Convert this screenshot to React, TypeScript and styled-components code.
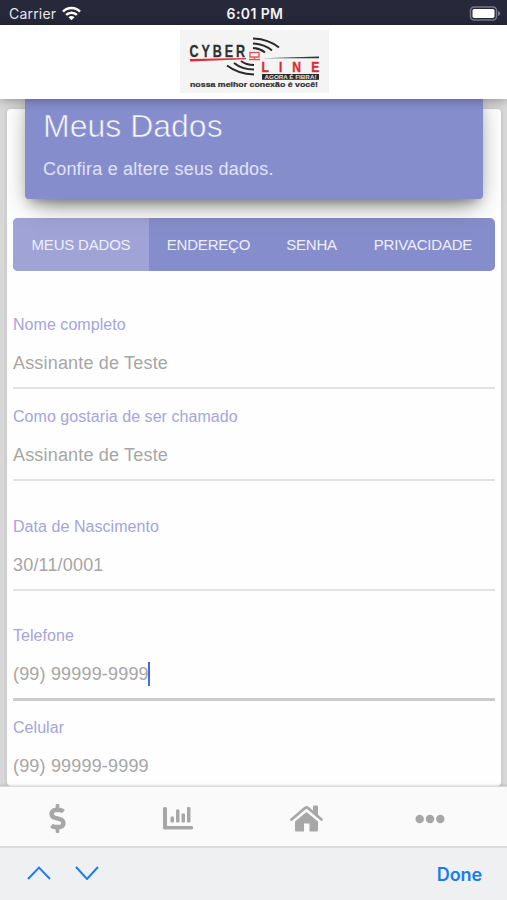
import React from "react";
import styled, { createGlobalStyle } from "styled-components";
import { FaDollarSign, FaEllipsisH } from "react-icons/fa";

const GlobalStyle = createGlobalStyle`
  * { box-sizing: border-box; }
  body { margin: 0; background: #d8d8d8; font-family: "Liberation Sans", Arial, sans-serif; }
`;

const Screen = styled.div`
  display: flex;
  flex-direction: column;
  width: 507px;
  height: 900px;
  overflow: hidden;
  background: #d8d8d8;
`;

const StatusBar = styled.header`
  display: grid;
  grid-template-columns: 1fr auto 1fr;
  align-items: center;
  flex: none;
  height: 25px;
  padding: 2px 6px 0 9px;
  background: #272839;
  color: #e6e6ee;
  font: 400 14px/20px Inter, sans-serif;
`;

const Carrier = styled.div`
  display: flex;
  align-items: center;
  gap: 6px;
  letter-spacing: 0.2px;
`;

const Clock = styled.div`
  color: #f4f4f8;
  font-weight: 600;
  font-size: 14px;
  letter-spacing: 0.4px;
`;

const BatteryIcon = styled.svg`
  justify-self: end;
  margin-top: -1px;
`;

const LogoBar = styled.div`
  position: relative;
  z-index: 2;
  display: flex;
  flex: none;
  justify-content: center;
  height: 74px;
  padding-top: 5px;
  padding-left: 1px;
  background: #fff;
  box-shadow: 0 1px 10px rgba(0, 0, 0, 0.32);
`;

const Content = styled.main`
  flex: 1;
  min-height: 0;
  padding: 10px 6px 0 7px;
  overflow: hidden;
`;

const Card = styled.section`
  height: 677px;
  padding: 0 6px;
  background: #fefefe;
  border-radius: 4px;
  box-shadow: 0 1px 4px rgba(0, 0, 0, 0.14);
`;

const Hero = styled.div`
  height: 110px;
  margin: 0 12px;
  padding: 19px 18px 0 18px;
  transform: translateY(-20px);
  border-radius: 4px;
  background: #868dcc;
  box-shadow: 0 13px 24px -10px rgba(50, 55, 50, 0.6), 0 4px 22px rgba(0, 0, 0, 0.13),
    0 7px 9px -5px rgba(50, 60, 50, 0.35);
`;

const Title = styled.h1`
  margin: 0;
  color: #f7f8ff;
  font-size: 32px;
  font-weight: 400;
  line-height: 36px;
  -webkit-text-stroke: 0.6px #868dcc;
`;

const Subtitle = styled.p`
  margin: 14px 0 0;
  color: #e0e3f8;
  font-size: 18px;
  line-height: 22px;
  letter-spacing: 0.2px;
`;

const Tabs = styled.nav`
  display: flex;
  height: 53px;
  overflow: hidden;
  margin-top: -1px;
  border-radius: 5px;
  background: #868dcc;
`;

const Tab = styled.button<{ $width: number; $active?: boolean }>`
  width: ${(p) => p.$width}px;
  height: 100%;
  padding: 0;
  border: 0;
  background: ${(p) => (p.$active ? "#9fa3d6" : "transparent")};
  color: #eef0ff;
  font: 400 15px/20px "Liberation Sans", Arial, sans-serif;
  letter-spacing: -0.2px;
  white-space: nowrap;
`;

const Form = styled.form`
  padding-top: 44px;
`;

const Field = styled.label<{ $gap?: number; $focused?: boolean }>`
  display: block;
  height: ${(p) => (p.$focused ? 75 : 74)}px;
  margin-bottom: ${(p) => p.$gap ?? 17}px;
  border-bottom: ${(p) => (p.$focused ? "3px solid #cbcbcb" : "2px solid #e2e2e2")};
`;

const FieldName = styled.span`
  display: block;
  color: #a5a5db;
  font-size: 16px;
  line-height: 20px;
  letter-spacing: 0.05px;
`;

const FieldValue = styled.span`
  display: flex;
  align-items: center;
  height: 26px;
  margin-top: 15px;
  color: #a6a6a6;
  font-size: 18px;
  letter-spacing: 0.18px;
`;

const Caret = styled.i`
  width: 2px;
  height: 24px;
  margin-left: -1px;
  background: #4468e0;
`;

const BottomNav = styled.nav`
  position: relative;
  z-index: 1;
  display: grid;
  grid-template-columns: 115px 125px 132px 116px;
  flex: none;
  height: 60px;
  border-top: 1px solid #dadada;
  background: #fafafa;
  color: #a7a7a7;
  box-shadow: 0 -1px 2px rgba(0, 0, 0, 0.12);
`;

const NavItem = styled.button`
  display: flex;
  align-items: center;
  justify-content: center;
  padding: 4px 0 0;
  border: 0;
  background: none;
  color: inherit;
`;

const Accessory = styled.footer`
  display: flex;
  align-items: center;
  gap: 24px;
  flex: none;
  height: 54px;
  padding: 0 25px 2px 27px;
  border-top: 2px solid #dcdddf;
  background: #eff0f2;
`;

const Done = styled.button`
  margin: 3px 0 0 auto;
  padding: 0;
  border: 0;
  background: none;
  color: #177cf0;
  font: 600 18px/24px Inter, sans-serif;
  letter-spacing: -0.1px;
`;

const Wifi = () => (
  <svg width="19" height="15" viewBox="0 0 19 15" fill="none" stroke="#fff" strokeWidth="2.5">
    <path d="M1 5.6C5.7.9 13.3.9 18 5.6" />
    <path d="M4.1 8.9c3-3 7.800-3 10.800 0" />
    <path d="M6.500 11.200c1.700-1.600 4.300-1.600 6 0L9.500 14.200z" fill="#fff" stroke="none" />
  </svg>
);

const Battery = () => (
  <BatteryIcon width="32" height="15" viewBox="0 0 32 15">
    <rect x="1.500" y="1" width="26" height="13" rx="3.500" fill="none" stroke="#77778a" strokeWidth="1.500" />
    <rect x="3.500" y="3" width="22" height="9" rx="1.700" fill="#fff" />
    <path d="M29 5v5c3-.8 3-4.200 0-5z" fill="#77778a" />
  </BatteryIcon>
);

const Logo = () => (
  <svg width="149" height="63" viewBox="0 0 149 63" fontFamily="Liberation Sans, Arial, sans-serif" fontWeight="700">
    <rect width="149" height="63" fill="#f4f4f4" />
    <text transform="translate(9.500 27) scale(.76 1)" fontSize="16.500" fill="#303030" stroke="#303030" strokeWidth=".3" textLength="73" lengthAdjust="spacing">
      CYBER
    </text>
    <path d="M10 29l56-1v1.300L10 31.500z" fill="#e02c35" />
    <g fill="none" stroke="#292929" strokeWidth="2">
      <path d="M73 8.500q15 .5 26 9" />
      <path d="M73 13.500q11 .5 19 7" />
      <path d="M73 18q7 .5 12 4.500" />
      <path d="M47 35.500q11 8.500 27 9" />
      <path d="M54 33q8 6.500 20 6.500" />
      <path d="M61 31q5 4 13 4" />
    </g>
    <g fill="none" stroke="#df555a" strokeWidth="1.400">
      <rect x="70" y="22.500" width="9" height="4.500" />
      <path d="M74.500 27v2.500M69 29.500h11" />
    </g>
    <path d="M82 28.300l57-1.800v1.800z" fill="#343434" />
    <g fill="#dc2932" stroke="#dc2932" strokeWidth=".4">
      <text transform="translate(81.500 41.800) scale(.78 1)" fontSize="15.500" textLength="74" lengthAdjust="spacing">
        LINE
      </text>
    </g>
    <rect x="82" y="44" width="57" height="5.800" fill="#292929" />
    <text x="84.500" y="49.200" fontSize="5.800" fill="#e8e8e8" textLength="52" lengthAdjust="spacingAndGlyphs">
      AGORA É FIBRA!
    </text>
    <text x="10" y="56.500" fontSize="6.300" fill="#303030" stroke="#303030" strokeWidth=".2" textLength="128" lengthAdjust="spacingAndGlyphs">
      nossa melhor conexão é você!
    </text>
  </svg>
);

const ChartIcon = () => (
  <svg width="30" height="23" viewBox="0 0 30 23" fill="currentColor">
    <path d="M1.500 0h1A1.500 1.500 0 0 1 4 1.500V19h24.500a1.500 1.500 0 0 1 0 3.500H1.500A1.500 1.500 0 0 1 0 21V1.500A1.500 1.500 0 0 1 1.500 0z" />
    <rect x="7.500" y="9.500" width="3.500" height="6" rx="1" />
    <rect x="13" y="2.500" width="3.500" height="13" rx="1" />
    <rect x="18.500" y="6.500" width="3.500" height="9" rx="1" />
    <rect x="24" y="0" width="3.500" height="15.500" rx="1" />
  </svg>
);

const HomeIcon = () => (
  <svg width="33" height="27" viewBox="0 0 33 27" fill="currentColor">
    <path d="M16.500 7L28 16.500V25q0 1.500-1.500 1.500H19.500V18.500h-5.500v8H6.500Q5 26.500 5 25V16.500z" />
    <path
      d="M1.500 14.500L15 3q1.500-1.200 3 0L31.500 14.500"
      fill="none"
      stroke="currentColor"
      strokeWidth="2.700"
      strokeLinecap="round"
    />
    <path d="M23 1.500Q23 .5 24 .5h3q1 0 1 1V12l-5-4.300z" />
  </svg>
);

const Chevron = ({ down }: { down?: boolean }) => (
  <svg width="24" height="14" viewBox="0 0 24 14" fill="none" stroke="#177cf0" strokeWidth="1.900">
    <path d={down ? "M1 1L12 13L23 1" : "M1 13L12 1.500L23 13"} />
  </svg>
);

const fields = [
  { name: "Nome completo", value: "Assinante de Teste", gap: 18 },
  { name: "Como gostaria de ser chamado", value: "Assinante de Teste", gap: 36 },
  { name: "Data de Nascimento", value: "30/11/0001", gap: 35 },
  { name: "Telefone", value: "(99) 99999-9999", focused: true },
  { name: "Celular", value: "(99) 99999-9999" },
];

export default function App() {
  return (
    <Screen>
      <GlobalStyle />
      <StatusBar>
        <Carrier>
          Carrier
          <Wifi />
        </Carrier>
        <Clock>6:01 PM</Clock>
        <Battery />
      </StatusBar>
      <LogoBar>
        <Logo />
      </LogoBar>
      <Content>
        <Card>
          <Hero>
            <Title>Meus Dados</Title>
            <Subtitle>Confira e altere seus dados.</Subtitle>
          </Hero>
          <Tabs>
            <Tab $width={136} $active>MEUS DADOS</Tab>
            <Tab $width={119}>ENDEREÇO</Tab>
            <Tab $width={87}>SENHA</Tab>
            <Tab $width={136}>PRIVACIDADE</Tab>
          </Tabs>
          <Form>
            {fields.map((f) => (
              <Field key={f.name} $gap={f.gap} $focused={f.focused}>
                <FieldName>{f.name}</FieldName>
                <FieldValue>
                  {f.value}
                  {f.focused && <Caret />}
                </FieldValue>
              </Field>
            ))}
          </Form>
        </Card>
      </Content>
      <BottomNav>
        <NavItem aria-label="Financeiro"><FaDollarSign size={29} /></NavItem>
        <NavItem aria-label="Consumo"><ChartIcon /></NavItem>
        <NavItem aria-label="Início"><HomeIcon /></NavItem>
        <NavItem aria-label="Mais"><FaEllipsisH size={30} /></NavItem>
      </BottomNav>
      <Accessory>
        <Chevron />
        <Chevron down />
        <Done>Done</Done>
      </Accessory>
    </Screen>
  );
}
